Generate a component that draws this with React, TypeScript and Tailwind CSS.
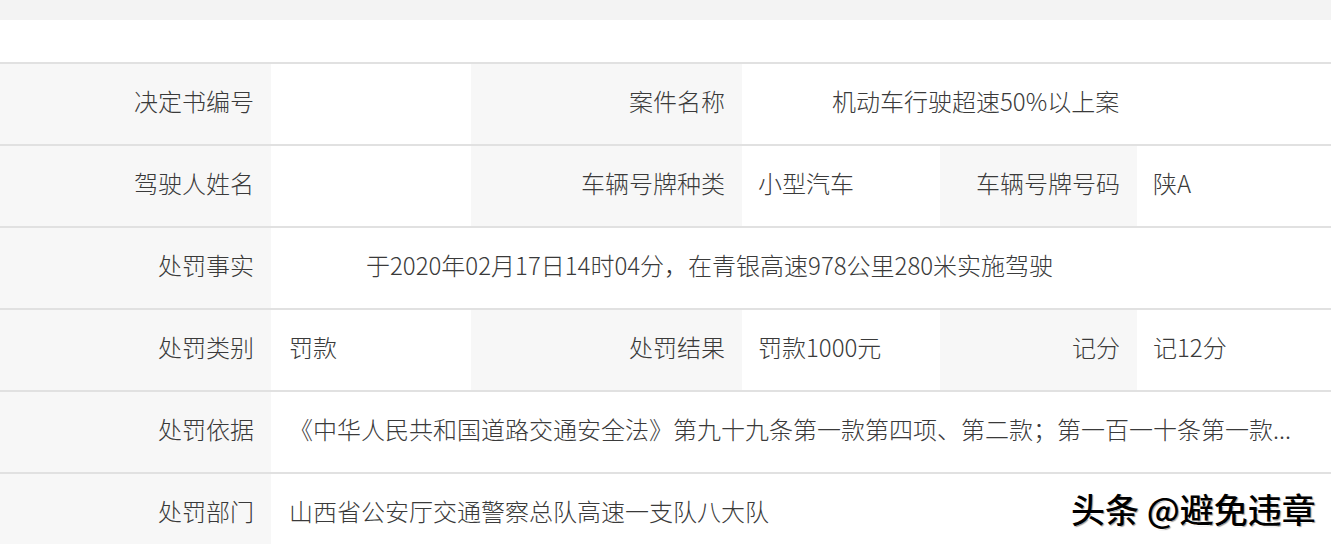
import React from "react";

const font = { fontFamily: '"Noto Sans CJK SC", "Noto Sans", sans-serif' };

function Label({ text, w }: { text: string; w: string }) {
  return (
    <div className={`${w} shrink-0 h-full bg-[#f7f7f7] flex items-center justify-end pr-[17px] pb-[6px]`}>
      {text}
    </div>
  );
}

function Row({ children }: { children: React.ReactNode }) {
  return <div className="flex h-[82px] border-t-2 border-[#e1e1e1]">{children}</div>;
}

export default function App() {
  return (
    <div
      className="relative w-[1331px] h-[544px] overflow-hidden bg-white text-[24px] leading-none font-light text-[#3a3a3a]"
      style={font}
    >
      <div className="h-[20px] bg-[#f3f3f3]" />
      <div className="h-[42px]" />

      <Row>
        <Label text="决定书编号" w="w-[271px]" />
        <div className="w-[200px] shrink-0" />
        <Label text="案件名称" w="w-[271px]" />
        <div className="flex-1 flex items-center pl-[90px] pb-[6px]">机动车行驶超速50%以上案</div>
      </Row>

      <Row>
        <Label text="驾驶人姓名" w="w-[271px]" />
        <div className="w-[200px] shrink-0" />
        <Label text="车辆号牌种类" w="w-[271px]" />
        <div className="w-[198px] shrink-0 flex items-center pl-[16px] pb-[6px]">小型汽车</div>
        <Label text="车辆号牌号码" w="w-[197px]" />
        <div className="flex-1 flex items-center pl-[16px] pb-[6px]">陕A</div>
      </Row>

      <Row>
        <Label text="处罚事实" w="w-[271px]" />
        <div className="flex-1 flex items-center pl-[95px] pb-[6px]">
          于2020年02月17日14时04分，在青银高速978公里280米实施驾驶
        </div>
      </Row>

      <Row>
        <Label text="处罚类别" w="w-[271px]" />
        <div className="w-[200px] shrink-0 flex items-center pl-[18px] pb-[6px]">罚款</div>
        <Label text="处罚结果" w="w-[271px]" />
        <div className="w-[198px] shrink-0 flex items-center pl-[16px] pb-[6px]">罚款1000元</div>
        <Label text="记分" w="w-[197px]" />
        <div className="flex-1 flex items-center pl-[16px] pb-[6px]">记12分</div>
      </Row>

      <Row>
        <Label text="处罚依据" w="w-[271px]" />
        <div className="flex-1 flex items-center pl-[18px] pb-[6px] whitespace-nowrap">
          《中华人民共和国道路交通安全法》第九十九条第一款第四项、第二款；第一百一十条第一款...
        </div>
      </Row>

      <Row>
        <Label text="处罚部门" w="w-[271px]" />
        <div className="flex-1 flex items-center pl-[18px] pb-[6px]">山西省公安厅交通警察总队高速一支队八大队</div>
      </Row>

      <div className="absolute left-[1071px] top-[492px] text-[34px] font-medium text-black whitespace-nowrap [text-shadow:-2px_1px_0_#ffffff,1px_1px_1px_#9a9a9a]">
        头条 @避免违章
      </div>
    </div>
  );
}
